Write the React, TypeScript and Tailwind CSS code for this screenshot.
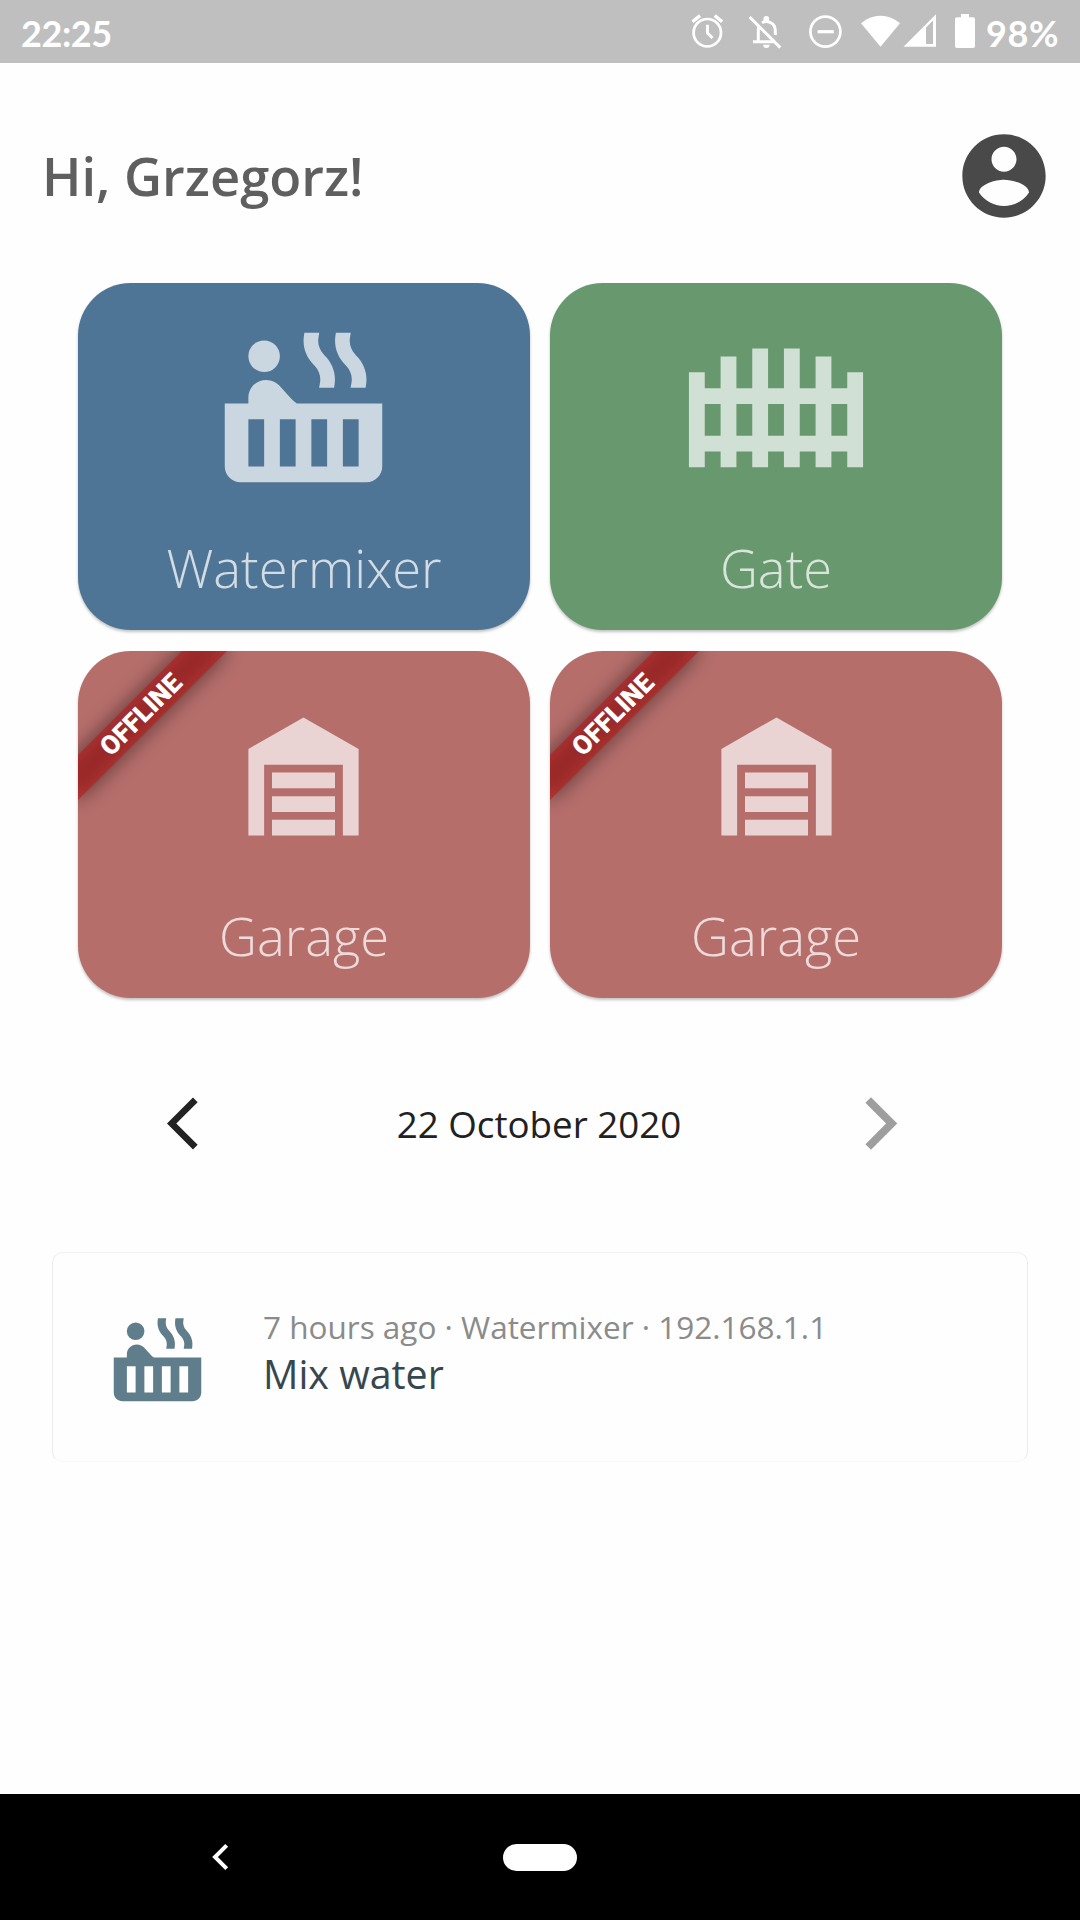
import type { ReactNode } from "react";

function HotTub({ className }: { className: string }) {
  return (
    <svg viewBox="0 0 24 24" fill="currentColor" className={className}>
      <circle cx="7" cy="6" r="2" />
      <path d="M11.15 12c-.31-.22-.59-.46-.82-.72l-1.4-1.55c-.19-.21-.43-.38-.69-.5-.29-.14-.62-.23-.96-.23h-.03C6.01 9 5 10.01 5 11.25V12H2v8c0 1.1.9 2 2 2h16c1.1 0 2-.9 2-2v-8H11.15zM7 20H5v-6h2v6zm4 0H9v-6h2v6zm4 0h-2v-6h2v6zm4 0h-2v-6h2v6zm-.35-14.14l-.07-.07c-.57-.62-.82-1.41-.67-2.2L18 3h-1.89l-.06.43c-.2 1.36.27 2.71 1.3 3.72l.07.06c.57.62.82 1.41.67 2.2l-.11.59h1.91l.06-.43c.21-1.36-.27-2.71-1.3-3.71zm-4 0l-.07-.07c-.57-.62-.82-1.41-.67-2.2L14 3h-1.89l-.06.43c-.2 1.36.27 2.71 1.3 3.72l.07.06c.57.62.82 1.41.67 2.2l-.11.59h1.91l.06-.43c.21-1.36-.27-2.71-1.3-3.71z" />
    </svg>
  );
}

function Gate({ className }: { className: string }) {
  return (
    <svg viewBox="0 0 24 24" fill="currentColor" className={className}>
      <path d="M1 8h2v2h2V6h2v4h2V5h2v5h2V5h2v5h2V6h2v4h2V8h2v12h-2v-2h-2v2h-2v-2h-2v2h-2v-2h-2v2H9v-2H7v2H5v-2H3v2H1zM3 12v4h2v-4zM7 12v4h2v-4zM11 12v4h2v-4zM15 12v4h2v-4zM19 12v4h2v-4z" fillRule="evenodd" />
    </svg>
  );
}

function Garage({ className }: { className: string }) {
  return (
    <svg viewBox="0 0 24 24" fill="currentColor" className={className}>
      <path d="M19 20h-2v-9H7v9H5V9l7-4 7 4v11M8 12h8v2H8v-2m0 3h8v2H8v-2m8 3v2H8v-2h8z" />
    </svg>
  );
}

function StatusBar() {
  return (
    <header className="flex h-[63px] shrink-0 items-start bg-[#bfbfbf] font-[Lato,sans-serif] text-[36px] leading-none font-bold text-white">
      <span className="ml-[21px] pt-[15px] tracking-[-0.4px]">22:25</span>
      <div className="mt-[14px] ml-auto flex items-start">
        <svg className="h-[35px] w-[33px]" viewBox="0 0 33 35" fill="none" stroke="currentColor" strokeWidth="2.7">
          <circle cx="16.3" cy="18.7" r="13.7" />
          <path d="M1.5 7.8 9 1.6M23.7 1.6 31.2 7.8" strokeWidth="3.4" />
          <path d="M16.5 10.7V19l5 5" strokeWidth="3" />
        </svg>
        <svg className="ml-[25px] h-[35px] w-[33px]" viewBox="0 0 33 35" fill="none" stroke="currentColor" strokeWidth="3">
          <path d="M.7 3 31.3 33.6M4 27.7h20.5M9.3 27V16c0-1.5.2-2.5.7-3.5M13 8.7c4-2.5 13-1 13.3 7.8V21" />
          <path d="M14.2 30.7h6.4a3.2 3.2 0 0 1-6.4 0zM17.3 1.9a2.8 2.8 0 0 1 2.8 2.8V8h-5.6V4.7a2.8 2.8 0 0 1 2.8-2.8z" fill="currentColor" stroke="none" />
        </svg>
        <svg className="ml-[27px] h-[35px] w-[33px]" viewBox="0 0 33 35" fill="none" stroke="currentColor" strokeWidth="2.7">
          <circle cx="16.4" cy="17.6" r="15" />
          <path d="M8.6 17.7h16.2" strokeWidth="3.2" />
        </svg>
        <svg className="ml-[19px] h-[35px] w-[39px]" viewBox="0 0 39 35" fill="currentColor">
          <path d="M0 9.3A29 29 0 0 1 39 9.3L19.5 32.7z" />
        </svg>
        <svg className="ml-[3px] h-[35px] w-[33px]" viewBox="0 0 33 35" fill="currentColor">
          <path fillRule="evenodd" d="M.5 32.8 33 .3v32.5zM23 13.5V30h7V6.5z" />
        </svg>
        <svg className="ml-[19px] h-[35px] w-[20px]" viewBox="0 0 20 35" fill="currentColor">
          <path d="M6 0h8v3.3h4a2 2 0 0 1 2 2V32a2 2 0 0 1-2 2H2a2 2 0 0 1-2-2V5.3a2 2 0 0 1 2-2h4z" />
        </svg>
        <span className="mr-[22px] ml-[11px] w-[72px] pt-px tracking-[0.6px] whitespace-nowrap">98%</span>
      </div>
    </header>
  );
}

function OfflineBanner() {
  return (
    <div className="absolute top-0 left-0 h-[31.5px] w-[210px] origin-top-left transform-[rotate(-45deg)_translate(-105px,73.5px)]">
      <div className="absolute inset-0 bg-black/50 blur-[10.4px]" />
      <div className="relative flex h-full items-center justify-center bg-[#b71c1c]/63 pr-px font-[Roboto,sans-serif] text-[26.5px] leading-none font-black text-white">
        OFFLINE
      </div>
    </div>
  );
}

function Tile({ color, label, icon, offline }: { color: string; label: string; icon: ReactNode; offline?: boolean }) {
  return (
    <button
      className={`relative flex h-[347px] flex-col items-center justify-between overflow-hidden rounded-[52.5px] pt-[26px] pb-[26.25px] shadow-[0_2px_3px_rgba(0,0,0,0.24)] ${color}`}
    >
      <span className="text-white/70">{icon}</span>
      <span className="text-[52.5px] leading-[71.5px] font-light text-white/75">{label}</span>
      {offline && <OfflineBanner />}
    </button>
  );
}

export default function App() {
  return (
    <div className="flex h-[1920px] w-[1080px] flex-col overflow-hidden bg-[#fefefe] font-['Open_Sans',sans-serif]">
      <StatusBar />

      <main className="flex flex-1 flex-col">
        <div className="mt-[63px] flex items-center justify-between pr-[26px] pl-[42px]">
          <h1 className="text-[52.5px] leading-[72px] font-semibold text-[#5f5f5f]">Hi, Grzegorz!</h1>
          <svg viewBox="0 0 24 24" fill="#494949" className="size-[100px]">
            <path d="M12 2C6.48 2 2 6.48 2 12s4.48 10 10 10 10-4.48 10-10S17.52 2 12 2zm0 3c1.66 0 3 1.34 3 3s-1.34 3-3 3-3-1.34-3-3 1.34-3 3-3zm0 14.2c-2.5 0-4.71-1.28-6-3.22.03-1.99 4-3.08 6-3.08 1.99 0 5.97 1.09 6 3.08-1.29 1.94-3.5 3.22-6 3.22z" />
          </svg>
        </div>

        <section className="mx-[78px] mt-[57px] grid grid-cols-2 gap-x-[20px] gap-y-[21px]">
          <Tile color="bg-[#4f7596]" label="Watermixer" icon={<HotTub className="mr-px size-[189px]" />} />
          <Tile color="bg-[#67986e]" label="Gate" icon={<Gate className="size-[190px]" />} />
          <Tile color="bg-[#b66e6b]" label="Garage" icon={<Garage className="mt-px mr-px size-[189px]" />} offline />
          <Tile color="bg-[#b66e6b]" label="Garage" icon={<Garage className="mt-px size-[189px]" />} offline />
        </section>

        <nav className="mx-[167px] mt-[73px] flex h-[105px] items-center justify-between">
          <svg viewBox="0 0 24 24" fill="#222222" className="size-[63px]">
            <path d="M11.67 3.87 9.9 2.1 0 12l9.9 9.9 1.77-1.77L3.54 12z" />
          </svg>
          <span className="pr-[2px] text-[36.75px] leading-[50px] text-[#212121]">22 October 2020</span>
          <svg viewBox="0 0 24 24" fill="#9e9e9e" className="size-[63px]">
            <path d="M5.88 4.12 13.76 12l-7.88 7.88L8 22l10-10L8 2z" />
          </svg>
        </nav>

        <article className="mx-[52px] mt-[76px] flex h-[210px] items-center rounded-[10.5px] border border-x-[#ececec] border-t-[#f1f1f1] border-b-[#f9f9f9] pl-[52px]">
          <HotTub className="size-[105px] text-[#607d8b]" />
          <div className="ml-[53px] flex flex-col pb-[9px]">
            <span className="text-[31.5px] leading-[42px] text-[#8b8b8b]">7 hours ago · Watermixer · 192.168.1.1</span>
            <span className="pt-px text-[39.375px] leading-[50px] text-[#37474f]">Mix water</span>
          </div>
        </article>
      </main>

      <footer className="grid h-[126px] shrink-0 grid-cols-3 items-center bg-black">
        <svg viewBox="0 0 18 28" fill="none" stroke="#fff" strokeWidth="4" className="ml-[211px] h-[28px] w-[18px]">
          <path d="M15.7 2.3 4 14l11.7 11.7" />
        </svg>
        <div className="h-[27px] w-[74px] justify-self-center rounded-full bg-white" />
      </footer>
    </div>
  );
}
